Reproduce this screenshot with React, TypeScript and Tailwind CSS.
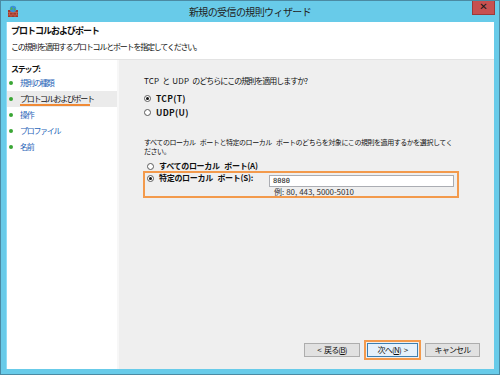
import React from "react";

const jp = { fontFamily: "'Noto Sans CJK JP', 'Noto Sans', sans-serif" };

function Sp({ w = 3 }: { w?: number }) {
  return <span className="inline-block" style={{ width: w }} />;
}

function Radio({ checked }: { checked?: boolean }) {
  return (
    <span className="w-[7px] h-[7px] rounded-full border border-[#5a5a5a] bg-white flex items-center justify-center shrink-0">
      {checked && <span className="w-[3px] h-[3px] rounded-full bg-[#111]" />}
    </span>
  );
}

function Step({ label, active }: { label: string; active?: boolean }) {
  return (
    <div className={`h-[16px] flex items-center relative ${active ? "bg-[#ebebeb]" : ""}`}>
      <span className="w-[4px] h-[4px] rounded-full bg-[#3aa635] ml-[2px] mr-[7px] shrink-0" />
      <span className={`text-[8px] leading-[10px] tracking-[-1.3px] ${active ? "text-[#111]" : "text-[#1f64b8]"}`}>{label}</span>
      {active && <span className="absolute left-[13px] top-[13px] w-[70px] h-[2px] bg-[#f08a36]" />}
    </div>
  );
}

export default function App() {
  return (
    <div className="w-[500px] h-[375px] bg-[#68cbe9] border border-[#4b8aa3] flex flex-col overflow-hidden" style={jp}>
      {/* title bar */}
      <div className="h-[21px] relative flex items-center justify-center shrink-0">
        <svg className="absolute left-[6px] top-[4px]" width="12" height="13" viewBox="0 0 12 13">
          <rect x="1" y="5" width="10" height="7" fill="#a0392c" />
          <path d="M1 7.5H11M1 10H11M4 5V7.5M8 5V7.5M2.5 7.5V10M6 7.5V10M9.5 7.5V10M4 10V12M8 10V12" stroke="#d0705c" strokeWidth="0.6" />
          <circle cx="6" cy="4" r="3.2" fill="#3b8fd8" />
          <path d="M4 2.5C5 2 6 3 5.5 4S4 5 3.2 4.5" fill="#4cb84a" />
          <path d="M7 3C8 3 8.8 4 8.2 5S7 6 6.8 5" fill="#4cb84a" />
        </svg>
        <span className="text-[10px] tracking-[-0.6px] text-[#222] leading-none">新規の受信の規則ウィザード</span>
        <div className="absolute right-[4px] top-[-1px] w-[23px] h-[15px] bg-[#c75050] border border-[#9b3a3a] border-t-0 flex items-center justify-center">
          <span className="text-[10px] font-bold text-[#1a1a1a] leading-none" style={{ fontFamily: "'DejaVu Sans', sans-serif" }}>✕</span>
        </div>
      </div>

      {/* client */}
      <div className="mx-[5px] flex-1 bg-white flex flex-col border-l border-[#8fdcf5]">
        {/* header */}
        <div className="h-[38px] border-b border-[#e3e3e3] pl-[4px] pt-[4px] shrink-0">
          <div className="text-[9px] leading-[10px] font-bold tracking-[-1px] text-[#111]">プロトコルおよびポート</div>
          <div className="text-[8px] leading-[10px] tracking-[-1.2px] text-[#111] mt-[6px]">この規則を適用するプロトコルとポートを指定してください。</div>
        </div>

        {/* body */}
        <div className="flex-1 flex">
          {/* steps */}
          <div className="w-[112px] bg-white border-r-2 border-[#f7f7f7] pt-[4px] shrink-0">
            <div className="text-[8px] leading-[10px] font-bold tracking-[-1.2px] text-[#111] pl-[4px]">ステップ:</div>
            <div className="mt-[1px] flex flex-col">
              <Step label="規則の種類" />
              <Step label="プロトコルおよびポート" active />
              <Step label="操作" />
              <Step label="プロファイル" />
              <Step label="名前" />
            </div>
          </div>

          {/* main */}
          <div className="flex-1 bg-[#efefef] flex flex-col pl-[25px] pr-[14px] pt-[16px] pb-[12px]">
            <div className="text-[8px] leading-[10px] tracking-[-1px] text-[#111] whitespace-nowrap">
              <span className="tracking-[0.2px]">TCP</span><Sp w={3} />と<Sp w={3} /><span className="tracking-[0.2px]">UDP</span><Sp w={3} />のどちらにこの規則を適用しますか?
            </div>
            <div className="mt-[7px] flex items-center h-[10px]">
              <Radio checked />
              <span className="ml-[5px] text-[8.5px] font-bold leading-[10px] tracking-[0.3px] text-[#111]">TCP(T)</span>
            </div>
            <div className="mt-[4px] flex items-center h-[10px]">
              <Radio />
              <span className="ml-[5px] text-[8.5px] font-bold leading-[10px] tracking-[0.3px] text-[#111]">UDP(U)</span>
            </div>

            <div className="mt-[21px] text-[7px] leading-[9px] tracking-[-0.45px] [word-spacing:3px] text-[#111] w-[314px]">
              すべてのローカル ポートと特定のローカル ポートのどちらを対象にこの規則を適用するかを選択してください。
            </div>
            <div className="mt-[5px] flex items-center h-[10px] pl-[3px]">
              <Radio />
              <span className="ml-[5px] text-[8px] font-bold leading-[10px] tracking-[-0.3px] [word-spacing:3px] text-[#111] whitespace-nowrap">すべてのローカル ポート(A)</span>
            </div>

            <div className="ml-[-1px] w-[316px] h-[27px] border-2 border-[#f39a4c] flex">
              <div className="w-[124px] flex items-start pl-[2px] h-[10px]">
                <div className="flex items-center h-[10px]">
                  <Radio checked />
                  <span className="ml-[5px] text-[8px] font-bold leading-[10px] tracking-[-0.3px] [word-spacing:3px] text-[#111] whitespace-nowrap">特定のローカル ポート(S):</span>
                </div>
              </div>
              <div className="flex flex-col pt-[2px]">
                <div className="w-[185px] h-[12px] bg-white border border-[#abadb3] flex items-center pl-[3px]">
                  <span className="text-[7px] leading-none text-[#111]" style={{ fontFamily: "'DejaVu Sans Mono', monospace" }}>8080</span>
                </div>
                <div className="pl-[5px] text-[8px] leading-[8px] tracking-[-0.1px] [word-spacing:0.5px] text-[#333] mt-[1px] whitespace-nowrap">例: 80, 443, 5000-5010</div>
              </div>
            </div>

            <div className="mt-auto flex justify-end items-center gap-[4px]">
              <button className="w-[56px] h-[14px] bg-[#e1e1e1] border border-[#adadad] flex items-center justify-center text-[8px] leading-none tracking-[-0.8px] text-[#111]">
                &lt;<Sp w={3} />戻る(<span className="underline">B</span>)
              </button>
              <div className="p-[1px] border-2 border-[#f39a4c] -my-[3px]">
                <button className="w-[51px] h-[14px] bg-[#e5f1fb] border border-[#3c7fb1] flex items-center justify-center text-[8px] leading-none tracking-[-0.8px] text-[#111]">
                  次へ(<span className="underline">N</span>)<Sp w={3} />&gt;
                </button>
              </div>
              <button className="w-[55px] h-[14px] bg-[#e1e1e1] border border-[#adadad] flex items-center justify-center text-[8px] leading-none tracking-[-0.8px] text-[#111]">
                キャンセル
              </button>
            </div>
          </div>
        </div>
      </div>
      <div className="h-[5px] shrink-0" />
    </div>
  );
}
